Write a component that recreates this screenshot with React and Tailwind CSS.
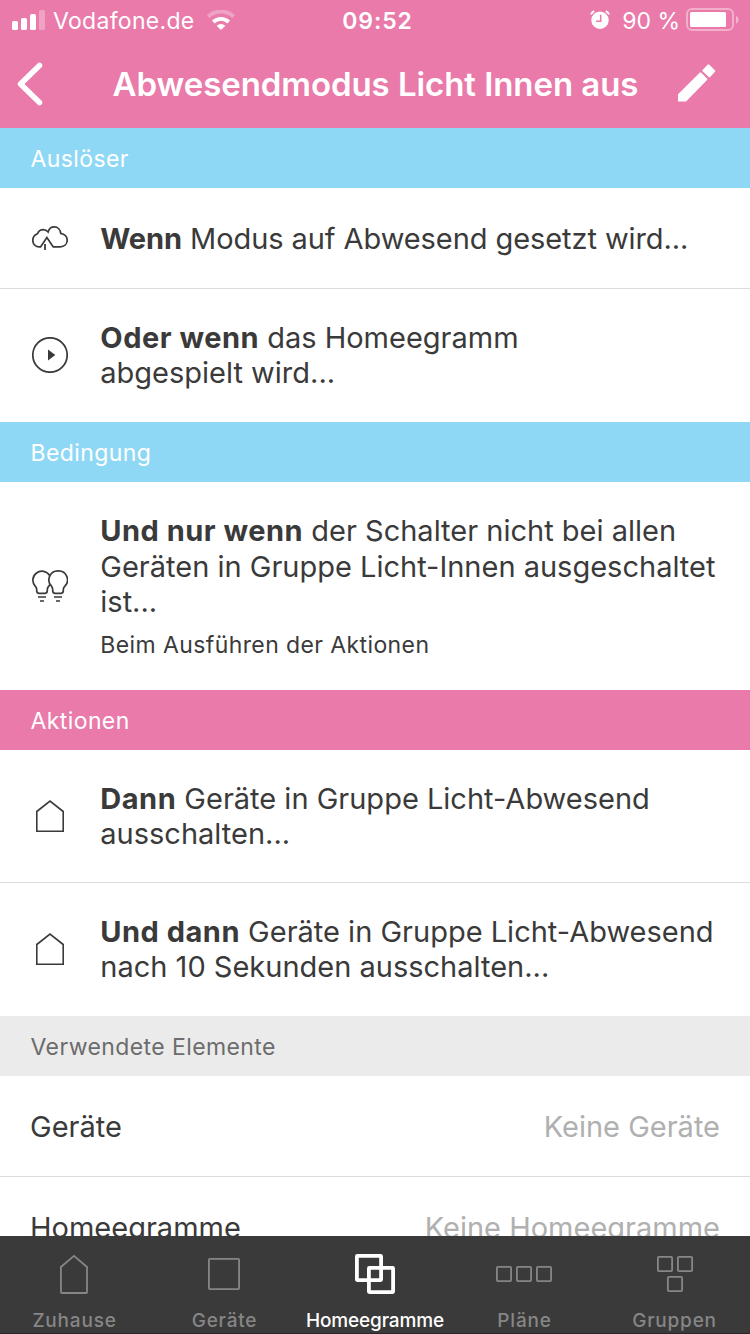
import clsx from "clsx";

function SignalIcon() {
  return (
    <svg width="34" height="20" viewBox="0 0 34 20" fill="#fff">
      <rect x="0" y="11" width="6" height="9" rx="1.6" />
      <rect x="9" y="8" width="6" height="12" rx="1.6" />
      <rect x="18" y="4" width="6" height="16" rx="1.6" />
      <rect x="27" y="0" width="6" height="20" rx="1.6" opacity="0.3" />
    </svg>
  );
}

function WifiIcon() {
  return (
    <svg width="28" height="20" viewBox="0 0 28 20" fill="none">
      <path d="M1.2 6.6a18.500 18.500 0 0 1 25.600 0" stroke="#fff" strokeWidth="4" opacity="0.3" />
      <path d="M6.300 12a11.300 11.300 0 0 1 15.400 0" stroke="#fff" strokeWidth="3.8" />
      <path d="M9.600 15.800a6.600 6.600 0 0 1 8.800 0L14 20z" fill="#fff" />
    </svg>
  );
}

function AlarmIcon() {
  return (
    <svg width="20" height="20" viewBox="0 0 20 20" fill="none">
      <circle cx="10" cy="10.2" r="8.7" fill="#fff" />
      <path d="M.9 4.4A7 7 0 0 1 4.2 1.2M15.8 1.2a7 7 0 0 1 3.3 3.2" stroke="#fff" strokeWidth="1.9" />
      <path d="M10.7 4.8v6.4H6" stroke="#e97aaa" strokeWidth="1.5" />
    </svg>
  );
}

function BatteryIcon() {
  return (
    <svg width="54" height="24" viewBox="0 0 54 24" fill="none">
      <rect x="1" y="1" width="46" height="21" rx="5" stroke="#fff" strokeWidth="2" opacity="0.4" />
      <rect x="4" y="4" width="36" height="15" rx="1.5" fill="#fff" />
      <path d="M50 8c3.400 1 3.400 6.500 0 7.500z" fill="#fff" opacity="0.45" />
    </svg>
  );
}

function PencilIcon() {
  return (
    <svg className="-mt-0.5" width="38" height="38" viewBox="0 0 38 38" fill="#fff">
      <path d="M0 30.200 21.700 8.700q.8-.8 1.600 0l5.700 5.700q.8.800 0 1.600L8 37.500H0z" />
      <path d="M24.600 5.900 29.500.8q.9-.9 1.900 0l5.400 5.400q.9 1 0 1.900l-4.700 4.800q-.7.700-1.400 0l-6.100-5.700q-.6-.6 0-1.300z" />
    </svg>
  );
}

function CloudIcon() {
  return (
    <svg width="36" height="24" viewBox="0 0 36 24" fill="none" stroke="#3a3a3a" strokeWidth="1.700">
      <path d="M9 20.900H7.300C3.500 20.900.8 18 .8 14.300c0-3.500 2-5.500 4.700-6.600C6.500 5.200 8.600 3.700 11.200 3.700c2 0 3.600.8 4.900 2.300C17 2.800 19.300.9 22.200.9c3.700 0 6.200 2.700 6.500 6.500 3.800.6 6.500 3.300 6.500 6.700 0 4-2.900 6.800-6.900 6.800h-7.500" />
      <path d="m8.500 20.900 6.400-9.300 6.400 9.300" />
      <path d="M13 18v6" strokeWidth="1.800" />
    </svg>
  );
}

function PlayIcon() {
  return (
    <svg width="36" height="36" viewBox="0 0 36 36" fill="none">
      <circle cx="18" cy="18" r="17.200" stroke="#3a3a3a" strokeWidth="1.700" />
      <path d="M16 12.500 23.300 18 16 23.500z" fill="#3a3a3a" />
    </svg>
  );
}

function BulbsIcon() {
  return (
    <svg width="36" height="32" viewBox="0 0 36 32" fill="none" stroke="#3a3a3a" strokeWidth="1.700">
      <path d="M17.700 5.700A9 9 0 1 0 3.400 16.400Q4.700 17.800 4.700 19.500v1.300q0 2.500 2.500 2.500h5.600q2.500 0 2.500-2.500v-1.300q0-1.700 1.300-3.100l1.300-1.900" />
      <path d="M26.200.9A9 9 0 0 0 19.700 16.400Q20.700 17.800 20.700 19.500v1.300q0 2.500 2.500 2.500h5.600q2.500 0 2.500-2.500v-1.300q0-1.700 1.400-3.100A9 9 0 0 0 26.200.9z" />
      <path d="M6 27h8M8 31h4M22 27h8M24 31h4" />
    </svg>
  );
}

function HouseIcon() {
  return (
    <svg width="28" height="32" viewBox="0 0 28 32" fill="none" stroke="#3a3a3a" strokeWidth="1.600">
      <path d="M.8 11.500 14 1.100l13.200 10.400v19.700H.8z" />
    </svg>
  );
}

function SectionHeader({ title, className }) {
  return (
    <div className={clsx("flex h-15 shrink-0 items-center px-[30.5px] pt-0.5 text-[23px] tracking-[0.4px]", className)}>
      {title}
    </div>
  );
}

function Row({ icon, children, className }) {
  return (
    <div className={clsx("flex shrink-0 items-center pl-8", className)}>
      <div className="flex w-9 shrink-0 justify-center">{icon}</div>
      <div className="-mt-px ml-[32.3px] text-[29px] leading-[35px] whitespace-nowrap">{children}</div>
    </div>
  );
}

function Lead({ children }) {
  return <b className="tracking-[0.5px]">{children}</b>;
}

function ElementRow({ label, value }) {
  return (
    <div className="flex h-[101px] shrink-0 items-center justify-between border-b border-[#dcdcdc] px-[30px] pt-px text-[29px]">
      <span>{label}</span>
      <span className="text-[#b0b0b0]">{value}</span>
    </div>
  );
}

const tabs = [
  {
    label: "Zuhause",
    icon: <path d="M6.900 16 20 4.900 33 16v25.300q0 .7-.7.700H7.700q-.7 0-.7-.7z" />,
  },
  {
    label: "Geräte",
    icon: <rect x="4.900" y="7.900" width="30.200" height="30.200" rx="1" />,
  },
  {
    label: "Homeegramme",
    active: true,
    icon: (
      <>
        <rect x="2.900" y="4.900" width="24.200" height="24.200" rx=".5" />
        <rect x="14.900" y="16.900" width="24.200" height="24.200" rx=".5" />
      </>
    ),
  },
  {
    label: "Pläne",
    icon: (
      <>
        <rect x="-7.100" y="15.900" width="14.200" height="14.200" rx="1" />
        <rect x="12.900" y="15.900" width="14.200" height="14.200" rx="1" />
        <rect x="32.900" y="15.900" width="14.200" height="14.200" rx="1" />
      </>
    ),
  },
  {
    label: "Gruppen",
    icon: (
      <>
        <rect x="3.900" y="5.900" width="14.200" height="14.200" rx="1" />
        <rect x="23.900" y="5.900" width="14.200" height="14.200" rx="1" />
        <rect x="13.900" y="25.900" width="14.200" height="14.200" rx="1" />
      </>
    ),
  },
];

function TabBar() {
  return (
    <nav className="grid h-[98px] shrink-0 grid-cols-5 border-b border-[#2c2528] bg-[#3a3a3a]">
      {tabs.map((tab) => (
        <div
          key={tab.label}
          className={clsx(
            "flex flex-col items-center pt-[15px] text-[19px] leading-6 font-medium",
            tab.active ? "tracking-[-0.15px] text-white" : "tracking-[0.8px] text-[#868686]"
          )}
        >
          <svg
            className="-ml-0.5 overflow-visible"
            width="40"
            height="46"
            viewBox="0 0 40 46"
            fill="none"
            stroke="currentColor"
            strokeWidth={tab.active ? 3.8 : 1.8}
          >
            {tab.icon}
          </svg>
          <span className={clsx("mt-3", !tab.active && "pr-px")}>{tab.label}</span>
        </div>
      ))}
    </nav>
  );
}

export default function App() {
  return (
    <div className="flex h-[1334px] w-[750px] flex-col overflow-hidden bg-white font-['Inter','Liberation_Sans',sans-serif] text-[#3a3a3a]">
      <header className="h-32 shrink-0 bg-[#e97aaa] text-white">
        {/* Status bar */}
        <div className="grid h-10 grid-cols-[1fr_auto_1fr] items-center pr-2.5 pl-3 text-[23px]">
          <div className="flex items-center">
            <SignalIcon />
            <span className="mt-0.5 ml-[7px] tracking-[0.3px]">Vodafone.de</span>
            <span className="ml-3">
              <WifiIcon />
            </span>
          </div>
          <span className="mt-0.5 pl-[3px] font-semibold tracking-[0.9px]">09:52</span>
          <div className="flex items-center justify-end">
            <AlarmIcon />
            <span className="mt-0.5 mr-[6px] ml-3">90 %</span>
            <BatteryIcon />
          </div>
        </div>
        {/* Title bar */}
        <div className="flex h-22 items-center pr-[34px] pl-[17px]">
          <svg width="26" height="44" viewBox="0 0 26 44" fill="none">
            <path d="M22.500 3.500 3.500 22l19 18.500" stroke="#fff" strokeWidth="5.500" strokeLinecap="round" strokeLinejoin="round" />
          </svg>
          <h1 className="flex-1 pt-0.5 pl-[30px] text-center text-[33px] font-semibold tracking-[-0.07px] whitespace-nowrap">
            Abwesendmodus Licht Innen aus
          </h1>
          <PencilIcon />
        </div>
      </header>

      <main className="flex min-h-0 flex-1 flex-col overflow-hidden">
        <SectionHeader title="Auslöser" className="bg-[#8fd8f5] text-white" />
        <Row icon={<CloudIcon />} className="h-[101px] border-b border-[#dcdcdc]">
          <p className="pt-px tracking-[-0.08px]">
            <b>Wenn</b> Modus auf Abwesend gesetzt wird...
          </p>
        </Row>
        <Row icon={<PlayIcon />} className="h-[133px] pb-px">
          <p>
            <Lead>Oder wenn</Lead> das Homeegramm
          </p>
          <p>abgespielt wird...</p>
        </Row>

        <SectionHeader title="Bedingung" className="bg-[#8fd8f5] text-white" />
        <Row icon={<BulbsIcon />} className="h-[208px]">
          <p>
            <Lead>Und nur wenn</Lead> der Schalter nicht bei allen
          </p>
          <p className="pt-px">Geräten in Gruppe Licht-Innen ausgeschaltet</p>
          <p>ist...</p>
          <p className="mt-3 -mb-px text-[23px] leading-[29px] tracking-[0.4px]">
            Beim Ausführen der Aktionen
          </p>
        </Row>

        <SectionHeader title="Aktionen" className="bg-[#e97aaa] text-white" />
        <Row icon={<HouseIcon />} className="h-[133px] border-b border-[#dcdcdc]">
          <p>
            <Lead>Dann</Lead> Geräte in Gruppe Licht-Abwesend
          </p>
          <p>ausschalten...</p>
        </Row>
        <Row icon={<HouseIcon />} className="h-[133px] pb-px">
          <p>
            <Lead>Und dann</Lead> Geräte in Gruppe Licht-Abwesend
          </p>
          <p>nach 10 Sekunden ausschalten...</p>
        </Row>

        <SectionHeader title="Verwendete Elemente" className="bg-[#ebebeb] text-[#6c6c6c]" />
        <ElementRow label="Geräte" value="Keine Geräte" />
        <ElementRow label="Homeegramme" value="Keine Homeegramme" />
      </main>

      <TabBar />
    </div>
  );
}
